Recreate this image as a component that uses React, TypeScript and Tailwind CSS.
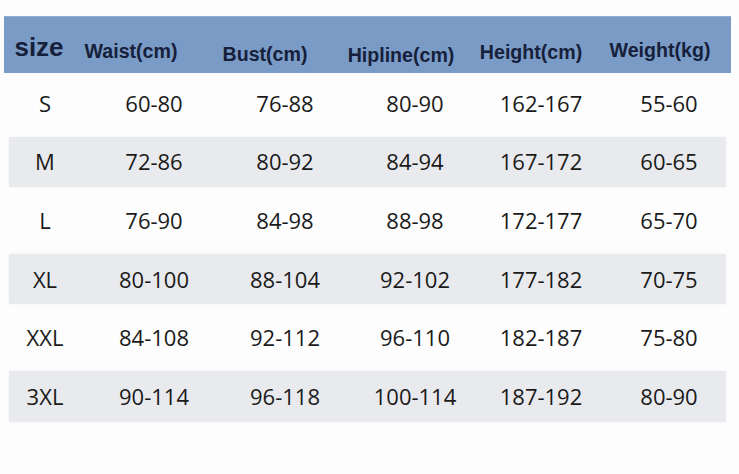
import React from "react";

const rows = [
  ["S", "60-80", "76-88", "80-90", "162-167", "55-60"],
  ["M", "72-86", "80-92", "84-94", "167-172", "60-65"],
  ["L", "76-90", "84-98", "88-98", "172-177", "65-70"],
  ["XL", "80-100", "88-104", "92-102", "177-182", "70-75"],
  ["XXL", "84-108", "92-112", "96-110", "182-187", "75-80"],
  ["3XL", "90-114", "96-118", "100-114", "187-192", "80-90"],
];

export default function App() {
  return (
    <div className="w-[739px] h-[474px] bg-[#fdfdfd] overflow-hidden pt-[16px]">
      <div
        className="ml-[4px] w-[727px] h-[57px] bg-[#7a9bc6] border-t border-[#8fadd3] grid grid-cols-[70px_114px_154px_118px_142px_116px] text-[#16203a] font-bold"
        style={{ fontFamily: '"Liberation Sans", Arial, sans-serif' }}
      >
        <div className="text-center text-[26px] leading-[26px] pt-[17px]">size</div>
        <div className="text-center text-[19.6px] leading-[20px] pt-[24px]">Waist(cm)</div>
        <div className="text-center text-[19.6px] leading-[20px] pt-[27px]">Bust(cm)</div>
        <div className="text-center text-[19.6px] leading-[20px] pt-[28px]">Hipline(cm)</div>
        <div className="text-center text-[19.6px] leading-[20px] pt-[25px]">Height(cm)</div>
        <div className="text-center text-[19.6px] leading-[20px] pt-[23px]">Weight(kg)</div>
      </div>
      <div
        className="mt-[1px] flex flex-col text-[#1a1a1a] text-[22px]"
        style={{ fontFamily: '"Open Sans", "Noto Sans", sans-serif' }}
      >
        {rows.map((r, i) => (
          <div key={r[0]} className="h-[58.6px] py-[4px] pl-[9px] w-[726px]">
            <div
              className={
                "h-full grid grid-cols-[72px_146px_116px_144px_108px_1fr] items-center " +
                (i % 2 === 1 ? "bg-[#e9eaee] shadow-[0_0_4px_rgba(0,0,0,0.04)]" : "")
              }
            >
              <div className="text-center">{r[0]}</div>
              <div className="text-center">{r[1]}</div>
              <div className="text-center">{r[2]}</div>
              <div className="text-center">{r[3]}</div>
              <div className="text-center">{r[4]}</div>
              <div className="text-center pl-[17px]">{r[5]}</div>
            </div>
          </div>
        ))}
      </div>
    </div>
  );
}
